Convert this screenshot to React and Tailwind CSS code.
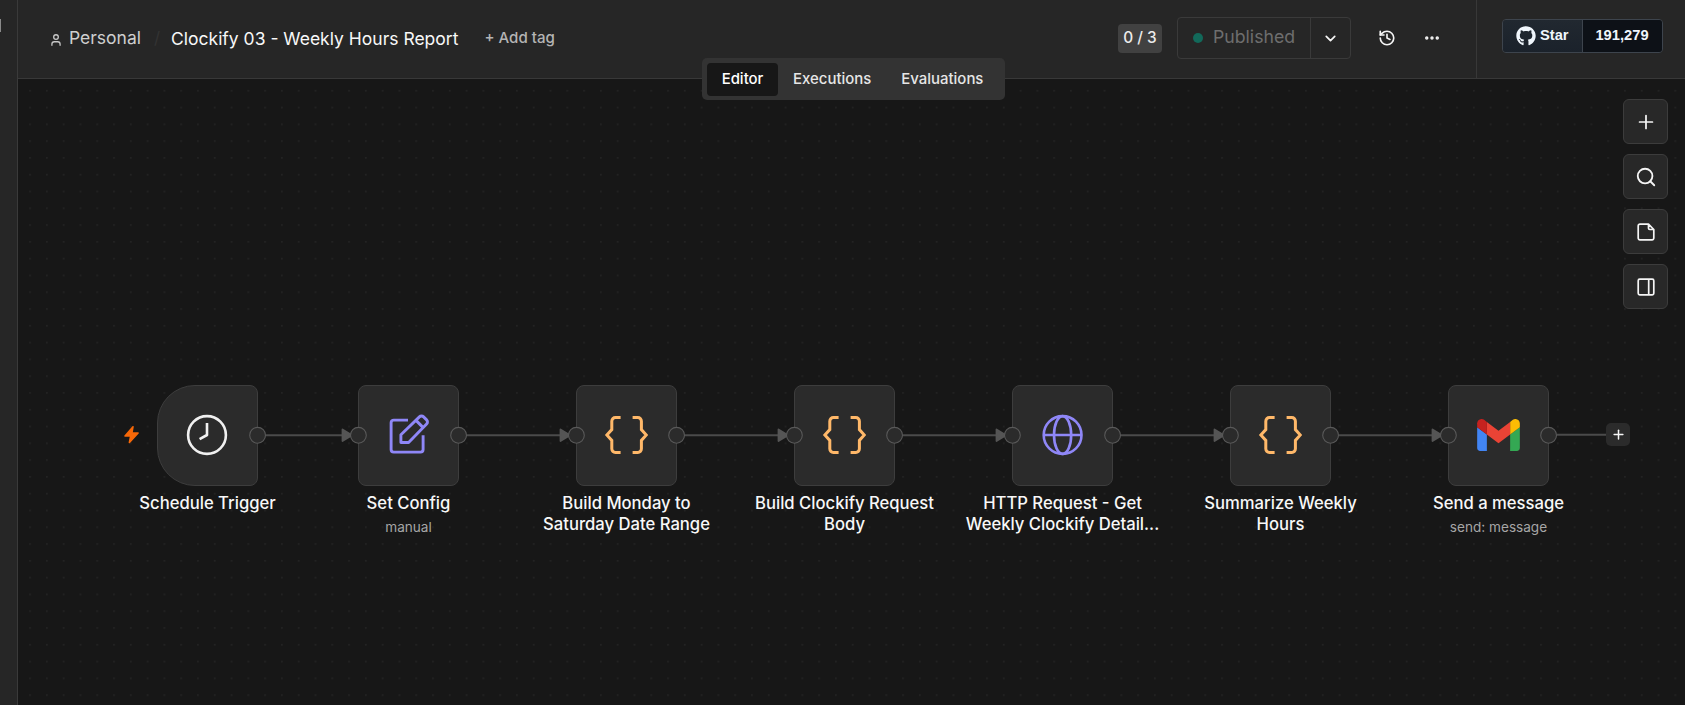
import React from 'react';
import { ChevronDown, History, Ellipsis, Plus, Search, User } from 'lucide-react';
import { FaGithub } from 'react-icons/fa';

const SIZE = 101;

function ClockIcon() {
  return (
    <svg width="42" height="42" viewBox="0 0 42 42" fill="none" stroke="#f0f0f0" strokeWidth="2.6">
      <circle cx="21" cy="21" r="18.9" />
      <path d="M21 9v12l-7.4 4.2" strokeLinejoin="round" />
    </svg>
  );
}

function EditIcon() {
  return (
    <svg width="42" height="42" viewBox="-0.5 0 42 42" fill="none" stroke="#8f87f7" strokeWidth="2.9" strokeLinejoin="round">
      <path d="M20.5 6.1H6.2a2.6 2.6 0 0 0-2.6 2.6v26.8a2.6 2.6 0 0 0 2.6 2.6H33a2.6 2.6 0 0 0 2.6-2.6V21.2" />
      <path d="M13.4 28.5v-7.8L31.9 2.9a3 3 0 0 1 4.2 0l3 3a3 3 0 0 1 0 4.2L21.1 28.5zM28.5 6.4l7.2 7.2" />
    </svg>
  );
}

function CodeIcon() {
  return (
    <svg width="44" height="40" viewBox="-0.6 0 44 40" fill="none" stroke="#ffb869" strokeWidth="3">
      <path d="M16 2.6h-5.2a3.6 3.6 0 0 0-3.6 3.6v8.4L2.3 20l4.9 5.4v8.4a3.6 3.6 0 0 0 3.6 3.6H16" />
      <path d="M28 2.6h5.2a3.6 3.6 0 0 1 3.6 3.6v8.4l4.9 5.4-4.9 5.4v8.4a3.6 3.6 0 0 1-3.6 3.6H28" />
    </svg>
  );
}

function GlobeIcon() {
  return (
    <svg width="42" height="42" viewBox="-0.6 0 42 42" fill="none" stroke="#8f87f7" strokeWidth="2.6">
      <circle cx="21" cy="21" r="18.9" />
      <ellipse cx="21" cy="21" rx="8.6" ry="18.9" />
      <path d="M2 21h38" />
    </svg>
  );
}

function GmailIcon() {
  return (
    <svg width="43" height="32" viewBox="52 42 88 66">
      <path fill="#4285f4" d="M58 108h14V74L52 59v43c0 3.32 2.69 6 6 6" />
      <path fill="#34a853" d="M120 108h14c3.32 0 6-2.69 6-6V59l-20 15" />
      <path fill="#fbbc04" d="M120 48v26l20-15v-8c0-7.42-8.47-11.65-14.4-7.2" />
      <path fill="#ea4335" d="M72 74V48l24 18 24-18v26L96 92" />
      <path fill="#c5221f" d="M52 51v8l20 15V48l-5.6-4.2c-5.94-4.45-14.4-.22-14.4 7.2" />
    </svg>
  );
}

function NoteIcon() {
  return (
    <svg width="20" height="20" viewBox="0 0 20 20" fill="none" stroke="#f5f5f5" strokeWidth="1.7" strokeLinejoin="round">
      <path d="M12.5 2.2H3.9a1.7 1.7 0 0 0-1.7 1.7v12.2a1.7 1.7 0 0 0 1.7 1.7h12.2a1.7 1.7 0 0 0 1.7-1.7V7.5L12.5 2.2v4a1.3 1.3 0 0 0 1.3 1.3h4" />
    </svg>
  );
}

function PanelIcon() {
  return (
    <svg width="20" height="20" viewBox="0 0 20 20" fill="none" stroke="#f5f5f5" strokeWidth="1.7">
      <rect x="2.2" y="2.2" width="15.6" height="15.6" rx="1.5" />
      <path d="M12.7 2.2v15.6" />
    </svg>
  );
}

const nodes = [
  { x: 157, icon: ClockIcon, lines: ['Schedule Trigger'], trigger: true },
  { x: 358, icon: EditIcon, lines: ['Set Config'], sub: 'manual' },
  { x: 576, icon: CodeIcon, lines: ['Build Monday to', 'Saturday Date Range'] },
  { x: 794, icon: CodeIcon, lines: ['Build Clockify Request', 'Body'] },
  { x: 1012, icon: GlobeIcon, lines: ['HTTP Request - Get', 'Weekly Clockify Detail...'] },
  { x: 1230, icon: CodeIcon, lines: ['Summarize Weekly', 'Hours'] },
  { x: 1448, icon: GmailIcon, lines: ['Send a message'], sub: 'send: message' },
];

function Node({ node }) {
  const Icon = node.icon;
  return (
    <div className="absolute top-[385px] flex w-[101px] flex-col items-center" style={{ left: node.x }}>
      <div
        className={`flex h-[101px] w-[101px] shrink-0 items-center justify-center border border-[#3d3d3d] bg-[#2b2b2b] pr-px pb-px ${
          node.trigger ? 'rounded-l-[38px] rounded-r-[8px]' : 'rounded-[8px]'
        }`}
      >
        <Icon />
      </div>
      <div className="mt-[7px] text-center text-[16.65px] leading-[21.3px] font-medium whitespace-nowrap text-[#f8f8f8]">
        {node.lines.map((line) => (
          <div key={line}>{line}</div>
        ))}
      </div>
      {node.sub && (
        <div className="mt-[5px] text-[13.6px] leading-[17px] whitespace-nowrap text-[#a6a6a6]">{node.sub}</div>
      )}
    </div>
  );
}

function Edges() {
  return (
    <svg className="absolute inset-0" width="1685" height="705">
      {nodes.slice(1).map((n, i) => (
        <g key={n.x}>
          <path d={`M${nodes[i].x + SIZE + 8} 435.3H${n.x - 14}`} stroke="#4b4b4b" strokeWidth="2.1" />
          <path d={`M${n.x - 15.5} 429.5l9.5 5.8-9.5 5.8z`} fill="#555" stroke="#555" strokeWidth="1.8" strokeLinejoin="round" />
        </g>
      ))}
      <path d="M1557 434.7H1607" stroke="#4b4b4b" strokeWidth="2.1" />
    </svg>
  );
}

function Handles() {
  return (
    <svg className="absolute inset-0" width="1685" height="705" fill="#2b2b2b" stroke="#595959" strokeWidth="1.1">
      {nodes.map((n) => (
        <g key={n.x}>
          {!n.trigger && <circle cx={n.x + 0.4} cy="435.3" r="7.9" />}
          <circle cx={n.x + SIZE - 0.4} cy="435.3" r="7.9" />
        </g>
      ))}
      <path
        d="M133 426.7l-8 9.2h5.7l-1.3 6.5 8.7-9.4h-6.2z"
        fill="#f76808"
        stroke="#f76808"
        strokeWidth="1.6"
        strokeLinejoin="round"
      />
    </svg>
  );
}

function Canvas() {
  return (
    <>
      <svg className="absolute inset-0" width="1685" height="705">
        <defs>
          <pattern id="dots" x="12.4" y="73.1" width="16.788" height="16.788" patternUnits="userSpaceOnUse">
            <circle cx="0.9" cy="0.9" r="0.8" fill="#292929" />
          </pattern>
        </defs>
        <rect x="18" y="79" width="1667" height="626" fill="url(#dots)" />
      </svg>
      <Edges />
      {nodes.map((n) => (
        <Node key={n.x} node={n} />
      ))}
      <Handles />
      <div className="absolute top-[423px] left-[1606px] flex h-[23px] w-[24px] items-center justify-center rounded-[5px] bg-[#2b2b2b]">
        <Plus size={15} strokeWidth={2.4} color="#f5f5f5" />
      </div>
    </>
  );
}

function Header() {
  return (
    <header className="flex h-[79px] shrink-0 border-b border-[#383838] bg-[#262626]">
      <div className="flex h-[76px] flex-1 items-center pl-[31px]">
        <User size={14} strokeWidth={2.2} color="#c8c8c8" className="mt-[3px]" />
        <span className="ml-[6px] text-[17.5px] text-[#cfcfcf]">Personal</span>
        <span className="ml-[13px] w-[7px] pt-px text-[17px] text-[#333]">/</span>
        <span className="ml-[10px] pt-[2px] text-[17.5px] text-[#f8f8f8]">Clockify 03 - Weekly Hours Report</span>
        <span className="ml-[26px] text-[15.1px] font-medium text-[#b4b4b4]">+ Add tag</span>
      </div>
      <div className="flex h-[76px] items-center">
        <span className="flex h-[29px] w-[44px] items-center justify-center rounded-[4px] bg-[#414141] text-[15.4px] font-medium text-[#ececec]">
          0 / 3
        </span>
        <div className="ml-[15px] flex h-[42px] w-[174px] rounded-[4px] border border-[#3a3a3a]">
          <div className="flex w-[133px] items-center border-r border-[#3a3a3a] pl-[15px]">
            <span className="h-[10px] w-[10px] rounded-full bg-[#12695a]" />
            <span className="ml-[10px] -mt-px text-[17.7px] text-[#6e6e6e]">Published</span>
          </div>
          <div className="flex flex-1 items-center justify-center">
            <ChevronDown size={17} strokeWidth={2.4} color="#f5f5f5" />
          </div>
        </div>
        <History size={18} strokeWidth={2.2} color="#f5f5f5" className="ml-[27px]" />
        <Ellipsis size={18} strokeWidth={2.6} color="#f5f5f5" className="mr-[35px] ml-[27px]" />
      </div>
      <div className="flex w-[209px] border-l border-[#383838] pt-[19px] pl-[25px]">
        <div className="flex h-[34px] w-[161px] overflow-hidden rounded-[4px] border border-[#3d444d] font-['Liberation_Sans',sans-serif] text-[14.7px] font-bold text-[#f0f6fc]">
          <div className="flex w-[80px] items-center border-r border-[#3d444d] bg-gradient-to-b from-[#212830] to-[#1b222b] pl-[13px]">
            <FaGithub size={20} />
            <span className="ml-[4px] -mt-[2px]">Star</span>
          </div>
          <div className="flex flex-1 items-center justify-center bg-[#0d1117] pr-px">
            <span className="-mt-[2px]">191,279</span>
          </div>
        </div>
      </div>
    </header>
  );
}

function Tabs() {
  return (
    <nav className="absolute top-[58px] left-[702px] flex h-[42px] w-[303px] items-center rounded-[5px] bg-[#333] px-[5px] text-[14.95px] font-medium text-[#e6e6e6]">
      <span className="flex h-[33px] w-[71px] items-center justify-center rounded-[4px] bg-[#171717] text-white">Editor</span>
      <span className="ml-[15px]">Executions</span>
      <span className="ml-[30px]">Evaluations</span>
    </nav>
  );
}

function ToolButton({ children }) {
  return (
    <button className="flex h-[45px] w-[45px] items-center justify-center rounded-[6px] border border-[#3c3c3c] bg-[#282828] pt-px pl-px">
      {children}
    </button>
  );
}

export default function App() {
  return (
    <div className="relative flex h-[705px] w-[1685px] overflow-hidden bg-[#171717] font-['Inter',sans-serif]">
      <aside className="w-[18px] shrink-0 border-r border-[#3a3a3a] bg-[#262626] pt-[19px]">
        <div className="h-[13px] w-px bg-[#8a8a8a]" />
      </aside>
      <Canvas />
      <main className="relative flex min-w-0 flex-1 flex-col">
        <Header />
        <div className="flex flex-col items-end gap-[10px] pt-[20px] pr-[17px]">
          <ToolButton><Plus size={22} strokeWidth={1.9} color="#f5f5f5" /></ToolButton>
          <ToolButton><Search size={22} strokeWidth={2} color="#f5f5f5" /></ToolButton>
          <ToolButton><NoteIcon /></ToolButton>
          <ToolButton><PanelIcon /></ToolButton>
        </div>
      </main>
      <Tabs />
    </div>
  );
}
